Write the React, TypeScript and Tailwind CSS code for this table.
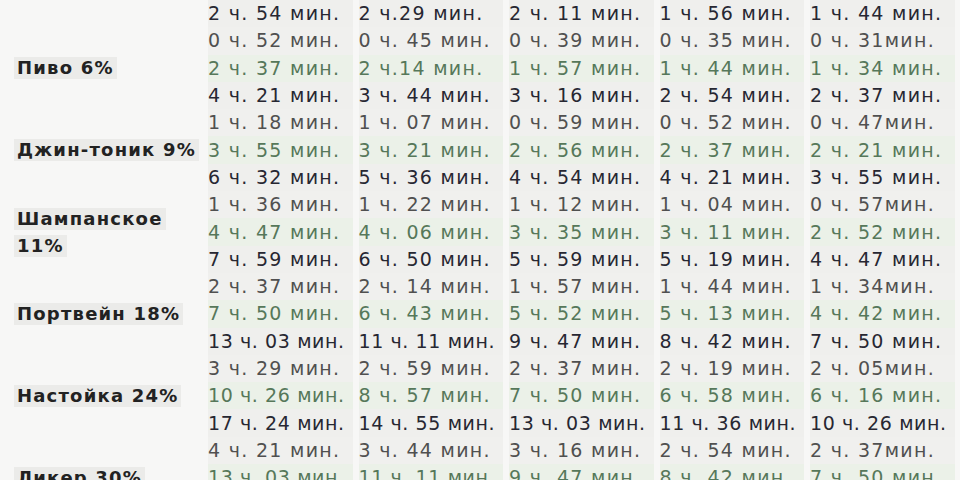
const TOP_ROW = ['2 ч. 54 мин.', '2 ч.29 мин.', '2 ч. 11 мин.', '1 ч. 56 мин.', '1 ч. 44 мин.']

const GROUPS: { label: string[]; rows: string[][] }[] = [
  {
    label: ['Пиво 6%'],
    rows: [
      ['0 ч. 52 мин.', '0 ч. 45 мин.', '0 ч. 39 мин.', '0 ч. 35 мин.', '0 ч. 31мин.'],
      ['2 ч. 37 мин.', '2 ч.14 мин.', '1 ч. 57 мин.', '1 ч. 44 мин.', '1 ч. 34 мин.'],
      ['4 ч. 21 мин.', '3 ч. 44 мин.', '3 ч. 16 мин.', '2 ч. 54 мин.', '2 ч. 37 мин.'],
    ],
  },
  {
    label: ['Джин-тоник 9%'],
    rows: [
      ['1 ч. 18 мин.', '1 ч. 07 мин.', '0 ч. 59 мин.', '0 ч. 52 мин.', '0 ч. 47мин.'],
      ['3 ч. 55 мин.', '3 ч. 21 мин.', '2 ч. 56 мин.', '2 ч. 37 мин.', '2 ч. 21 мин.'],
      ['6 ч. 32 мин.', '5 ч. 36 мин.', '4 ч. 54 мин.', '4 ч. 21 мин.', '3 ч. 55 мин.'],
    ],
  },
  {
    label: ['Шампанское', '11%'],
    rows: [
      ['1 ч. 36 мин.', '1 ч. 22 мин.', '1 ч. 12 мин.', '1 ч. 04 мин.', '0 ч. 57мин.'],
      ['4 ч. 47 мин.', '4 ч. 06 мин.', '3 ч. 35 мин.', '3 ч. 11 мин.', '2 ч. 52 мин.'],
      ['7 ч. 59 мин.', '6 ч. 50 мин.', '5 ч. 59 мин.', '5 ч. 19 мин.', '4 ч. 47 мин.'],
    ],
  },
  {
    label: ['Портвейн 18%'],
    rows: [
      ['2 ч. 37 мин.', '2 ч. 14 мин.', '1 ч. 57 мин.', '1 ч. 44 мин.', '1 ч. 34мин.'],
      ['7 ч. 50 мин.', '6 ч. 43 мин.', '5 ч. 52 мин.', '5 ч. 13 мин.', '4 ч. 42 мин.'],
      ['13 ч. 03 мин.', '11 ч. 11 мин.', '9 ч. 47 мин.', '8 ч. 42 мин.', '7 ч. 50 мин.'],
    ],
  },
  {
    label: ['Настойка 24%'],
    rows: [
      ['3 ч. 29 мин.', '2 ч. 59 мин.', '2 ч. 37 мин.', '2 ч. 19 мин.', '2 ч. 05мин.'],
      ['10 ч. 26 мин.', '8 ч. 57 мин.', '7 ч. 50 мин.', '6 ч. 58 мин.', '6 ч. 16 мин.'],
      ['17 ч. 24 мин.', '14 ч. 55 мин.', '13 ч. 03 мин.', '11 ч. 36 мин.', '10 ч. 26 мин.'],
    ],
  },
  {
    label: ['Ликер 30%'],
    rows: [
      ['4 ч. 21 мин.', '3 ч. 44 мин.', '3 ч. 16 мин.', '2 ч. 54 мин.', '2 ч. 37мин.'],
      ['13 ч. 03 мин.', '11 ч. 11 мин.', '9 ч. 47 мин.', '8 ч. 42 мин.', '7 ч. 50 мин.'],
      ['21 ч. 46 мин.', '18 ч. 39 мин.', '16 ч. 19 мин.', '14 ч. 31 мин.', '13 ч. 03 мин.'],
    ],
  },
]

// row tone: 0 = gray, 1 = green, 2 = dark
const TONES = [
  { text: 'text-[#505050]', bg: 'bg-[#f0f0ee]' },
  { text: 'text-[#56785a]', bg: 'bg-[#ebf1e8]' },
  { text: 'text-[#272732]', bg: 'bg-[#efefed]' },
]

function DataRow({ cells, tone }: { cells: string[]; tone: number }) {
  const t = TONES[tone]
  return (
    <div className="flex h-[27.3px]">
      {cells.map((c, i) => (
        <div key={i} className="w-[150.5px] shrink-0 flex pr-[6px]">
          <div
            className={`flex-1 flex items-center whitespace-nowrap ${
              c.length > 12 ? 'tracking-[0.6px]' : 'tracking-[1.3px]'
            } ${t.bg} ${t.text}`}
          >
            {c}
          </div>
        </div>
      ))}
    </div>
  )
}

export default function App() {
  return (
    <div className="w-[960px] h-[480px] overflow-hidden bg-[#f7f7f6] font-['DejaVu_Sans',sans-serif] text-[19px] leading-none">
      <div className="flex">
        <div className="w-[208px] shrink-0" />
        <DataRow cells={TOP_ROW} tone={2} />
      </div>
      {GROUPS.map((g, gi) => (
        <div key={gi} className="flex">
          <div className="w-[208px] shrink-0 flex items-center pl-[14px]">
            <div className="flex flex-col gap-[5px] font-bold text-[18px] text-[#222222] tracking-[1.2px]">
              {g.label.map((l, li) => (
                <span key={li} className="self-start bg-[#ebebe9] px-[3px] py-[2px]">
                  {l}
                </span>
              ))}
            </div>
          </div>
          <div className="flex flex-col">
            {g.rows.map((r, ri) => (
              <DataRow key={ri} cells={r} tone={ri} />
            ))}
          </div>
        </div>
      ))}
    </div>
  )
}
